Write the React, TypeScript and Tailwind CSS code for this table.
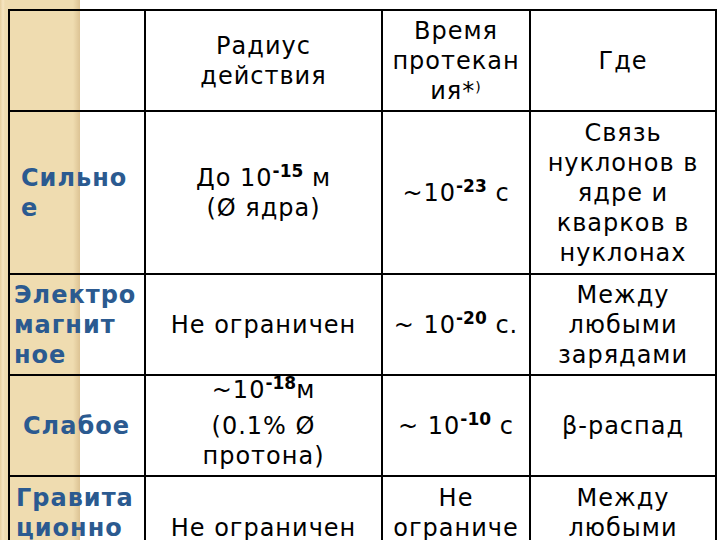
import React from "react";

const Sup = ({ children }: { children: React.ReactNode }) => (
  <span className="text-[17px] font-bold align-[9px] leading-none tracking-normal">{children}</span>
);

const Left = ({ children, pad }: { children: React.ReactNode; pad: string }) => (
  <td
    className={`border-2 border-black align-middle text-left text-[#2b5a90] font-bold text-[24px] leading-[30px] tracking-[1px] whitespace-nowrap ${pad}`}
  >
    {children}
  </td>
);

const Cell = ({ children }: { children: React.ReactNode }) => (
  <td className="border-2 border-black align-middle text-center text-[24px] leading-[30px] tracking-[1px] whitespace-nowrap text-black">
    {children}
  </td>
);

export default function App() {
  return (
    <div
      className="w-[720px] h-[540px] overflow-hidden bg-[linear-gradient(to_right,#e6cf9f_0px,#f6e6c2_3px,#efdcb0_5px,#efdcb0_73px,#dcc394_80px,#ffffff_80px)] pl-[8px] pt-[9px]"
      style={{ fontFamily: '"DejaVu Sans", Verdana, sans-serif' }}
    >
      <table className="table-fixed border-collapse w-[707px]">
        <colgroup>
          <col className="w-[136px]" />
          <col className="w-[237px]" />
          <col className="w-[148px]" />
          <col className="w-[186px]" />
        </colgroup>
        <tbody>
          <tr className="h-[101px]">
            <td className="border-2 border-black"></td>
            <Cell>
              Радиус
              <br />
              действия
            </Cell>
            <Cell>
              Время
              <br />
              протекан
              <br />
              ия*<span className="text-[14px] align-[7px] leading-none">)</span>
            </Cell>
            <Cell>Где</Cell>
          </tr>
          <tr className="h-[163px]">
            <Left pad="pl-[11px]">
              Сильно
              <br />е
            </Left>
            <Cell>
              До 10<Sup>-15</Sup> м
              <br />
              (Ø ядра)
            </Cell>
            <Cell>
              ~10<Sup>-23</Sup> с
            </Cell>
            <Cell>
              Связь
              <br />
              нуклонов в
              <br />
              ядре и
              <br />
              кварков в
              <br />
              нуклонах
            </Cell>
          </tr>
          <tr className="h-[101px]">
            <Left pad="pl-[4px]">
              Электро
              <br />
              магнит
              <br />
              ное
            </Left>
            <Cell>Не ограничен</Cell>
            <Cell>
              ~ 10<Sup>-20</Sup> с.
            </Cell>
            <Cell>
              Между
              <br />
              любыми
              <br />
              зарядами
            </Cell>
          </tr>
          <tr className="h-[101px]">
            <Left pad="pl-[13px]">Слабое</Left>
            <Cell>
              <div className="-mt-[6px] mb-[6px]">
                ~10<Sup>-18</Sup>м
              </div>
              <div>(0.1% Ø</div>
              <div>протона)</div>
            </Cell>
            <Cell>
              ~ 10<Sup>-10</Sup> с
            </Cell>
            <Cell>β-распад</Cell>
          </tr>
          <tr className="h-[104px]">
            <Left pad="pl-[6px]">
              Гравита
              <br />
              ционно
              <br />е
            </Left>
            <Cell>Не ограничен</Cell>
            <Cell>
              Не
              <br />
              ограниче
              <br />н
            </Cell>
            <Cell>
              Между
              <br />
              любыми
              <br />
              зарядами
            </Cell>
          </tr>
        </tbody>
      </table>
    </div>
  );
}
